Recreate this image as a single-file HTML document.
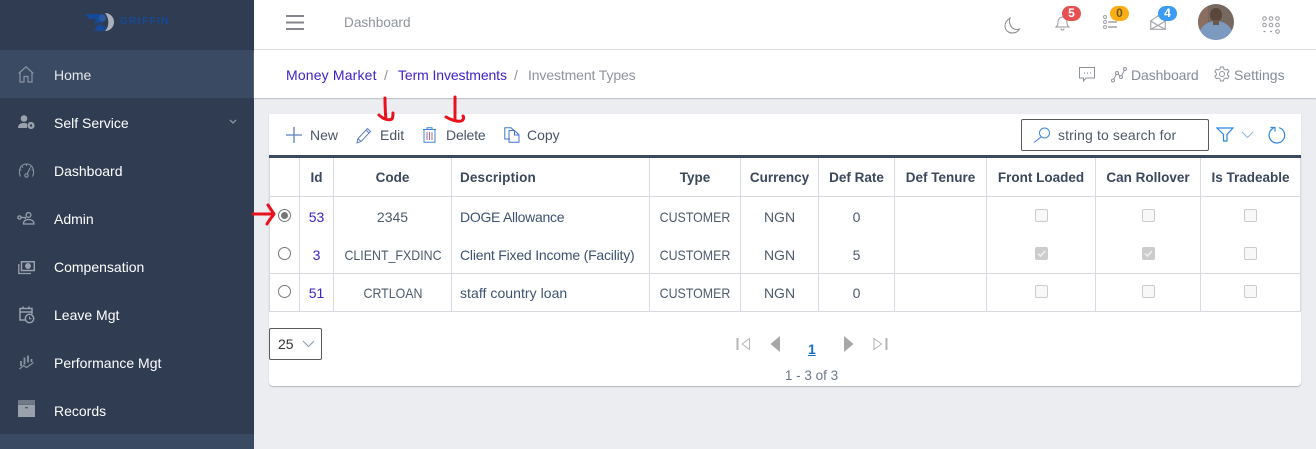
<!DOCTYPE html>
<html><head><meta charset="utf-8"><style>
html,body{margin:0;padding:0;width:1316px;height:449px;overflow:hidden;background:#ecedf0}
body{position:relative;font-family:"Liberation Sans",sans-serif;font-size:14px;color:#4d5a6b}
.a,.t,.c,svg.i{position:absolute}
.t{white-space:nowrap;line-height:18px}
.c{white-space:nowrap;line-height:18px;text-align:center;transform:translateX(-50%)}
.c.u{transform:translateX(-50%) scaleX(.885)}
.n{color:#fff;left:54px}
.h{font-weight:700;color:#3a475d;top:169px;font-size:13.5px}
.l{color:#3f22c9}
.g{color:#6b7686}
.ln{position:absolute;background:#d8dae0}
.cb{position:absolute;width:11px;height:11px;border:1px solid #ccc;border-radius:2px;background:#f8f8f8}
.cb.on{background:#ccc}
.r{position:absolute;width:11px;height:11px;border:1px solid #777;border-radius:50%;background:#fff}
.b{position:absolute;color:#fff;font-size:12px;font-weight:700;line-height:15px;height:15px;width:19px;border-radius:8px;text-align:center}
svg.i{fill:none}
</style></head><body>
<div class="a" style="left:0;top:0;width:254px;height:449px;background:#2f3c51"></div>
<div class="a" style="left:0;top:50px;width:254px;height:48px;background:#3b4a63"></div>
<div class="a" style="left:0;top:434px;width:254px;height:15px;background:#3b4a63"></div>
<svg class="i" style="left:84px;top:11px" width="32" height="22" viewBox="0 0 32 22"><path d="M1 3H19L18 12H10L12 8H5z" fill="#174a96"/><path d="M10 19L15 13 22 16 21 20H12z" fill="#174a96"/><path d="M21 2A9 9 0 1 1 21 20C26 15 25 7 21 2z" fill="#aab1bc"/><circle cx="18.500" cy="7" r="3.500" fill="#2a5aa0"/></svg>
<div class="t" style="left:120px;top:13px;color:#174a96;font-weight:700;font-size:10px;letter-spacing:1.400px">GRIFFIN</div>

<div class="t" style="left:54px;top:66px;color:#e3e6ea">Home</div>
<div class="t n" style="top:114px">Self Service</div>
<div class="t n" style="top:162px">Dashboard</div>
<div class="t n" style="top:210px">Admin</div>
<div class="t n" style="top:258px">Compensation</div>
<div class="t n" style="top:306px">Leave Mgt</div>
<div class="t n" style="top:354px">Performance Mgt</div>
<div class="t n" style="top:402px">Records</div>

<svg class="i" style="left:18px;top:66px" width="16" height="17" viewBox="0 0 16 17" stroke="#8a94a3" stroke-width="1.200"><path d="M.7 7.500L8 .8l7.300 6.700M2 6.500V16h4V10.500h4V16h4V6.500"/></svg>
<svg class="i" style="left:18px;top:115px;fill:#99a1ad" width="17" height="15" viewBox="0 0 17 15"><circle cx="6" cy="3.500" r="3.300"/><path d="M0 13C0 9 3 8 6 8c1.500 0 2.500.3 3 .7V13z"/><circle cx="13" cy="10.500" r="3.600"/><circle cx="13" cy="10.500" r="1.200" fill="#2f3c51"/></svg>
<svg class="i" style="left:228px;top:118px" width="10" height="7" viewBox="0 0 10 7" stroke="#8a94a3" stroke-width="1.300"><path d="M2 2l3 3 3-3"/></svg>
<svg class="i" style="left:18px;top:163px" width="17" height="15" viewBox="0 0 17 15" stroke="#8a94a3" stroke-width="1.100"><path d="M2.500 13.500C.2 9 1.500 1 8.500 1s8.300 8 6 12.500M2 7h1.500M4 3.500l1 1M8.500 1v2M13 3.500l-1 1M15 7h-1.500M12 5L9.200 11"/><circle cx="8.500" cy="12.500" r="1.700"/></svg>
<svg class="i" style="left:17px;top:212px" width="18" height="13" viewBox="0 0 18 13" stroke="#99a1ad" stroke-width="1.300"><circle cx="11.500" cy="3" r="2.400"/><path d="M6.500 12C6.500 8.500 9 7.500 11.500 7.500S17 8.500 17 12z"/><circle cx="2.500" cy="5.500" r="1.600"/><path d="M4 5.500H8.500V7"/></svg>
<svg class="i" style="left:18px;top:261px" width="17" height="14" viewBox="0 0 17 14" stroke="#99a1ad" stroke-width="1.500"><path d="M3.500.8H16.300V9.500H3.500z"/><circle cx="10" cy="5" r="2.200" fill="#99a1ad"/><path d="M.8 3V12.500H13" stroke-width="1.300"/></svg>
<svg class="i" style="left:19px;top:306px" width="16" height="18" viewBox="0 0 16 18" stroke="#99a1ad" stroke-width="1.500"><path d="M7 14H1V2.500H13V8M1 6H13M4 .5V3M10 .5V3"/><circle cx="10.500" cy="12.500" r="4.200"/><path d="M10.500 10.500v2.200h2" stroke-width="1"/></svg>
<svg class="i" style="left:19px;top:355px" width="15" height="15" viewBox="0 0 15 15" stroke="#8a94a3" stroke-width="1.800"><path d="M2 6v5M5.500 2.500v7M9 .5v7M12.500 4v3"/><path d="M.5 14l4-3.500 3 2L14.500 7.500" stroke-width="1.200"/></svg>
<svg class="i" style="left:18px;top:400px" width="17" height="17" viewBox="0 0 17 17"><rect x="0" y="0" width="17" height="4" fill="#6f7987"/><rect x="0" y="4.500" width="17" height="12.500" fill="#99a1ad"/><rect x="7" y="7" width="3" height="1.300" fill="#4d5a6b"/></svg>

<!-- top header -->
<div class="a" style="left:254px;top:0;width:1062px;height:49px;background:#fff"></div>
<div class="a" style="left:254px;top:49px;width:1062px;height:1px;background:#dcdde0"></div>
<div class="a" style="left:254px;top:50px;width:1062px;height:48px;background:#fff;box-shadow:0 1px 1px #b9bcc4"></div>
<svg class="i" style="left:286px;top:15px" width="18" height="15" viewBox="0 0 18 15" stroke="#86868d" stroke-width="2"><path d="M0 1h18M0 7.500h18M0 14h18"/></svg>
<div class="t" style="left:344px;top:14px;color:#8f949b;font-size:13.600px">Dashboard</div>
<svg class="i" style="left:1004px;top:17px" width="17" height="17" viewBox="0 0 17 17" stroke="#8a8a90" stroke-width="1"><path d="M6 1C3 3 .8 6 1 9.500 1.500 14 5 16 8.500 16c3 0 5.500-1.500 7-4-4 1.500-7.500-.5-9-3.500C5.300 6 5 3.500 6 1z"/></svg>
<svg class="i" style="left:1055px;top:14px" width="15" height="17" viewBox="0 0 15 17" stroke="#9a9a9f" stroke-width="1"><path d="M1 13c1.500-1 2-2.500 2-5s1.500-5 4.500-5 4.500 2.500 4.500 5 .5 4 2 5zM6 14.500c0 2 3 2 3 0"/></svg>
<div class="b" style="left:1062px;top:6px;background:#e84f52">5</div>
<svg class="i" style="left:1103px;top:15px" width="15" height="15" viewBox="0 0 15 15" stroke="#a3a3a8"><rect x=".5" y=".5" width="3" height="3" rx="1.500"/><rect x=".5" y="5.500" width="3" height="3" rx="1.500"/><rect x=".5" y="10.500" width="3" height="3" rx="1.500"/><path d="M5 7h9M5 12h9" stroke-width="1.500"/></svg>
<div class="b" style="left:1110px;top:6px;background:#fbad14;color:#6e5a1d">0</div>
<svg class="i" style="left:1150px;top:15px" width="16" height="15" viewBox="0 0 16 15" stroke="#a8a8ad" stroke-width="1.200"><path d="M.7 6L8 .8 15.300 6V14.300H.7zM.7 6L8 10.500 15.300 6M.7 14.300L8 10.500l7.300 3.800"/></svg>
<div class="b" style="left:1158px;top:6px;background:#3b9bf5">4</div>
<svg class="i" style="left:1198px;top:4px" width="36" height="36" viewBox="0 0 36 36"><defs><clipPath id="av"><circle cx="18" cy="18" r="18"/></clipPath></defs><g clip-path="url(#av)"><rect width="36" height="36" fill="#77695f"/><rect width="10" height="36" fill="#8a6f60"/><ellipse cx="18" cy="32" rx="17" ry="15" fill="#7c9ac0"/><ellipse cx="18" cy="11" rx="6" ry="7" fill="#5a463b"/><rect x="15" y="16" width="6" height="5" fill="#6a5548"/></g></svg>
<svg class="i" style="left:1262px;top:16px" width="18" height="18" viewBox="0 0 18 18" stroke="#9a9a9f"><circle cx="2.500" cy="2.500" r="1.800"/><circle cx="9" cy="2.500" r="1.800"/><circle cx="15.500" cy="2.500" r="1.800"/><circle cx="2.500" cy="9" r="1.800"/><circle cx="9" cy="9" r="1.800"/><circle cx="15.500" cy="9" r="1.800"/><circle cx="15.500" cy="15.500" r="1.800"/><path d="M1.500 15.500h2M8 15.500h2" stroke-width="1.200"/></svg>

<!-- breadcrumb -->
<div class="t l" style="left:286px;top:66px;letter-spacing:.16px">Money Market</div>
<div class="t" style="left:384px;top:66px;color:#8f949b">/</div>
<div class="t l" style="left:398px;top:66px;letter-spacing:-.1px">Term Investments</div>
<div class="t" style="left:514px;top:66px;color:#8f949b">/</div>
<div class="t" style="left:528px;top:66px;color:#8f949b;letter-spacing:-.12px">Investment Types</div>
<svg class="i" style="left:1079px;top:67px" width="16" height="15" viewBox="0 0 16 15" stroke="#8f949b"><path d="M.5.500H15.500V11H7L4.500 14V11H.5z"/><path d="M5 6h1M8 6h1M11 6h1" stroke-width="1.200"/></svg>
<svg class="i" style="left:1111px;top:67px" width="16" height="16" viewBox="0 0 16 16" stroke="#8f949b"><circle cx="2" cy="13.500" r="1.500"/><circle cx="6" cy="6" r="1.500"/><circle cx="10" cy="10" r="1.500"/><circle cx="14" cy="2" r="1.500"/><path d="M2.700 12L5.300 7.500M7 7l2 2M10.700 8.500L13.300 3.500"/></svg>
<div class="t g" style="left:1131px;top:66px;color:#858c97;letter-spacing:-.1px">Dashboard</div>
<svg class="i" style="left:1214px;top:66px" width="16" height="16" viewBox="0 0 16 16" stroke="#8f949b"><circle cx="8" cy="8" r="2.500"/><path d="M6.500 1h3l.4 2 1.700 1 2-.7 1.400 2.500-1.500 1.400v1.600l1.500 1.400-1.400 2.500-2-.7-1.700 1-.4 2h-3l-.4-2-1.700-1-2 .7L.9 10.200l1.500-1.400V7.200L.9 5.800l1.400-2.500 2 .7 1.700-1z"/></svg>
<div class="t" style="left:1234px;top:66px;color:#858c97">Settings</div>

<!-- card -->
<div class="a" style="left:269px;top:114px;width:1032px;height:272px;background:#fff;border-radius:0 0 4px 4px;box-shadow:0 1px 1px #b3b6c0"></div>
<svg class="i" style="left:286px;top:127px" width="16" height="16" viewBox="0 0 16 16" stroke="#5d7fbf" stroke-width="1.300"><path d="M8 0v16M0 8h16"/></svg>
<div class="t" style="left:310px;top:126px;color:#4a5566">New</div>
<svg class="i" style="left:356px;top:127px" width="16" height="17" viewBox="0 0 16 17" stroke="#5d7fbf"><path d="M1 16l1-4.500L11.500 1.500l3 3L5 14.500zM2 11.500l3 3M10 3l3 3"/></svg>
<div class="t" style="left:380px;top:126px;color:#4a5566">Edit</div>
<svg class="i" style="left:422px;top:127px" width="15" height="16" viewBox="0 0 15 16" stroke="#3c86dc"><path d="M1 2.500H14M5 2.500V.8H10V2.500M2 2.500V15.300H13V2.500"/><path d="M5 5v8M7.500 5v8M10 5v8" stroke="#a36a9c"/></svg>
<div class="t" style="left:446px;top:126px;color:#4a5566;letter-spacing:-.15px">Delete</div>
<svg class="i" style="left:504px;top:127px" width="16" height="16" viewBox="0 0 16 16" stroke="#3c76d0"><path d="M6 12H.8V.8H7L10 3.500"/><path d="M5 3.500H10.500L15 8V15.300H5z"/><path d="M10.500 3.500V8H15"/></svg>
<div class="t" style="left:527px;top:126px;color:#4a5566">Copy</div>

<div class="a" style="left:1021px;top:119px;width:186px;height:30px;border:1px solid #5a5a5a;border-radius:2px"></div>
<svg class="i" style="left:1033px;top:127px" width="18" height="16" viewBox="0 0 18 16" stroke="#3c86dc"><circle cx="11.500" cy="6" r="5"/><path d="M8 10L1 15.500"/></svg>
<div class="t" style="left:1058px;top:126px;color:#4f5a68;letter-spacing:.12px">string to search for</div>
<svg class="i" style="left:1216px;top:127px" width="18" height="15" viewBox="0 0 18 15" stroke="#2f86e6" stroke-width="1.200"><path d="M1 1H17L11 7.500V14H7.500V7.500z"/></svg>
<svg class="i" style="left:1241px;top:131px" width="13" height="8" viewBox="0 0 13 8" stroke="#8fb6e0"><path d="M1 1l5.500 5.500L12 1"/></svg>
<svg class="i" style="left:1268px;top:126px" width="18" height="18" viewBox="0 0 18 18" stroke="#2f86e6" stroke-width="1.200"><path d="M5.500 2.200A7.800 7.800 0 1 0 11 1.700M2.500 1.500h4.500v4" /></svg>

<!-- table lines -->
<div class="a" style="left:269px;top:155px;width:1032px;height:3px;background:#3b4a63"></div>
<div class="ln" style="left:269px;top:158px;width:1px;height:154px"></div>
<div class="ln" style="left:299px;top:158px;width:1px;height:154px"></div>
<div class="ln" style="left:333px;top:158px;width:1px;height:154px"></div>
<div class="ln" style="left:451px;top:158px;width:1px;height:154px"></div>
<div class="ln" style="left:649px;top:158px;width:1px;height:154px"></div>
<div class="ln" style="left:740px;top:158px;width:1px;height:154px"></div>
<div class="ln" style="left:818px;top:158px;width:1px;height:154px"></div>
<div class="ln" style="left:894px;top:158px;width:1px;height:154px"></div>
<div class="ln" style="left:986px;top:158px;width:1px;height:154px"></div>
<div class="ln" style="left:1095px;top:158px;width:1px;height:154px"></div>
<div class="ln" style="left:1200px;top:158px;width:1px;height:154px"></div>
<div class="ln" style="left:1300px;top:158px;width:1px;height:154px"></div>
<div class="ln" style="left:269px;top:196px;width:1032px;height:1px"></div>
<div class="ln" style="left:269px;top:273px;width:1032px;height:1px"></div>
<div class="ln" style="left:269px;top:311px;width:1032px;height:1px"></div>

<div class="c h" style="left:316.500px">Id</div>
<div class="c h" style="left:392.500px">Code</div>
<div class="t h" style="left:460px;letter-spacing:.15px">Description</div>
<div class="c h" style="left:695px">Type</div>
<div class="c h" style="left:779.500px">Currency</div>
<div class="c h" style="left:856.500px">Def Rate</div>
<div class="c h" style="left:940.500px">Def Tenure</div>
<div class="c h" style="left:1041px">Front Loaded</div>
<div class="c h" style="left:1148px">Can Rollover</div>
<div class="c h" style="left:1250.500px">Is Tradeable</div>

<div class="r" style="left:278px;top:209px"></div><div class="a" style="left:281px;top:212px;width:7px;height:7px;border-radius:50%;background:#777"></div>
<div class="r" style="left:278px;top:247px"></div>
<div class="r" style="left:278px;top:285px"></div>

<div class="c l" style="left:316.500px;top:208px">53</div>
<div class="c" style="left:392.500px;top:208px">2345</div>
<div class="t" style="left:460px;top:208px;color:#3e5273;letter-spacing:-.28px">DOGE Allowance</div>
<div class="c u" style="left:695px;top:208px">CUSTOMER</div>
<div class="c" style="left:779.500px;top:208px">NGN</div>
<div class="c" style="left:856.500px;top:208px">0</div>

<div class="c l" style="left:316.500px;top:246px">3</div>
<div class="c u" style="left:392.500px;top:246px">CLIENT_FXDINC</div>
<div class="t" style="left:460px;top:246px;color:#3e5273;letter-spacing:-.2px">Client Fixed Income (Facility)</div>
<div class="c u" style="left:695px;top:246px">CUSTOMER</div>
<div class="c" style="left:779.500px;top:246px">NGN</div>
<div class="c" style="left:856.500px;top:246px">5</div>

<div class="c l" style="left:316.500px;top:284px">51</div>
<div class="c u" style="left:392.500px;top:284px">CRTLOAN</div>
<div class="t" style="left:460px;top:284px;color:#3e5273;letter-spacing:.05px">staff country loan</div>
<div class="c u" style="left:695px;top:284px">CUSTOMER</div>
<div class="c" style="left:779.500px;top:284px">NGN</div>
<div class="c" style="left:856.500px;top:284px">0</div>

<div class="cb" style="left:1035px;top:209px"></div><div class="cb" style="left:1142px;top:209px"></div><div class="cb" style="left:1244px;top:209px"></div>
<div class="cb on" style="left:1035px;top:247px"></div><div class="cb on" style="left:1142px;top:247px"></div><div class="cb" style="left:1244px;top:247px"></div>
<svg class="i" style="left:1035px;top:247px" width="13" height="13" viewBox="0 0 13 13" stroke="#ececec" stroke-width="1.800"><path d="M3 6.500l2.500 2.500L10 4"/></svg>
<svg class="i" style="left:1142px;top:247px" width="13" height="13" viewBox="0 0 13 13" stroke="#ececec" stroke-width="1.800"><path d="M3 6.500l2.500 2.500L10 4"/></svg>
<div class="cb" style="left:1035px;top:285px"></div><div class="cb" style="left:1142px;top:285px"></div><div class="cb" style="left:1244px;top:285px"></div>

<!-- footer -->
<div class="a" style="left:269px;top:328px;width:51px;height:30px;border:1px solid #5a5a5a;border-radius:2px"></div>
<div class="t" style="left:278px;top:335px;color:#333">25</div>
<svg class="i" style="left:302px;top:340px" width="13" height="8" viewBox="0 0 13 8" stroke="#8a9aaa"><path d="M1 1l5.500 5.500L12 1"/></svg>
<svg class="i" style="left:736px;top:337px" width="16" height="14" viewBox="0 0 16 14" stroke="#b5b5b5"><path d="M1.500 1v12" stroke-width="2"/><path d="M13.500 1.500V12.500L6 7z"/></svg>
<svg class="i" style="left:769px;top:336px" width="12" height="16" viewBox="0 0 12 16"><path d="M11 0V16L1.500 8z" fill="#a6a6a6"/></svg>
<div class="t" style="left:808px;top:340px;color:#1a6fc4;font-weight:700;text-decoration:underline">1</div>
<svg class="i" style="left:843px;top:336px" width="12" height="16" viewBox="0 0 12 16"><path d="M1 0V16L10.500 8z" fill="#a6a6a6"/></svg>
<svg class="i" style="left:872px;top:337px" width="16" height="14" viewBox="0 0 16 14" stroke="#b5b5b5"><path d="M14.500 1v12" stroke-width="2"/><path d="M2 1.500V12.500L9.500 7z"/></svg>
<div class="c" style="left:811.500px;top:367px;color:#6b7686;font-size:13.500px">1 - 3 of 3</div>

<!-- red annotations -->
<svg class="i" style="left:250px;top:95px;overflow:visible" width="300" height="140" viewBox="0 0 300 140" stroke="#e8111c" stroke-width="3" stroke-linecap="round" stroke-linejoin="round"><path d="M135 3C135 10 135 16 136 24M129 20C133 24 139 26 142 24 143 22 143 20 143 18"/><path d="M205 2V25M196 22C201 25 208 27 211 26 214 25 214 22 213 21"/><path d="M3 119H23M18 110C20 113 22 116 24 119 22 122 19 125 17 129"/></svg>
</body></html>
